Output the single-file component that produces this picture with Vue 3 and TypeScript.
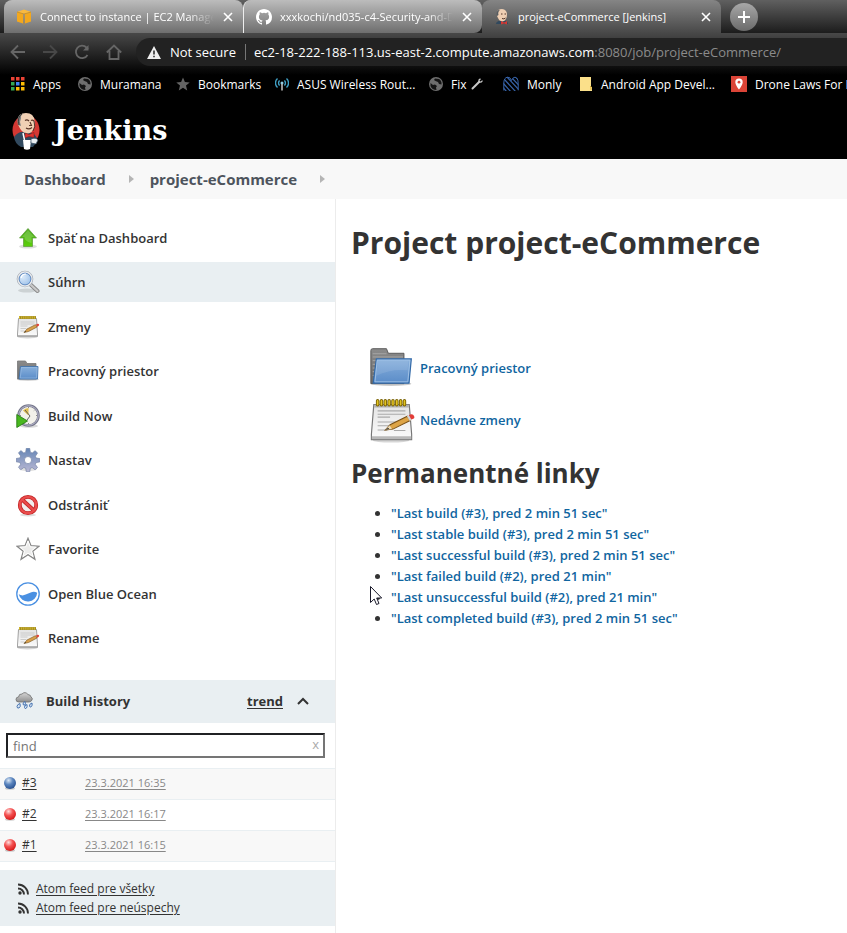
<script setup lang="ts">
import { ref } from 'vue'

interface Tab { icon: string; title: string; active?: boolean }
interface Bookmark { icon: string; label: string; wrench?: boolean }
interface Task { icon: string; label: string; selected?: boolean }
interface Build { id: string; color: 'blue' | 'red'; date: string }

const tabs: Tab[] = [
  { icon: 'cube', title: 'Connect to instance | EC2 Management Console' },
  { icon: 'github', title: 'xxxkochi/nd035-c4-Security-and-DevOps' },
  { icon: 'butler', title: 'project-eCommerce [Jenkins]', active: true },
]

const bookmarks: Bookmark[] = [
  { icon: 'apps', label: 'Apps' },
  { icon: 'globe', label: 'Muramana' },
  { icon: 'star-solid', label: 'Bookmarks' },
  { icon: 'antenna', label: 'ASUS Wireless Rout...' },
  { icon: 'globe', label: 'Fix', wrench: true },
  { icon: 'monly', label: 'Monly' },
  { icon: 'note', label: 'Android App Devel...' },
  { icon: 'pin', label: 'Drone Laws For E' },
]

const crumbs: string[] = ['Dashboard', 'project-eCommerce']

const tasks: Task[] = [
  { icon: 'up', label: 'Späť na Dashboard' },
  { icon: 'search', label: 'Súhrn', selected: true },
  { icon: 'notepad-small', label: 'Zmeny' },
  { icon: 'folder-small', label: 'Pracovný priestor' },
  { icon: 'clock', label: 'Build Now' },
  { icon: 'gear', label: 'Nastav' },
  { icon: 'forbid', label: 'Odstrániť' },
  { icon: 'star', label: 'Favorite' },
  { icon: 'ocean', label: 'Open Blue Ocean' },
  { icon: 'notepad-small', label: 'Rename' },
]

const builds: Build[] = [
  { id: '#3', color: 'blue', date: '23.3.2021 16:35' },
  { id: '#2', color: 'red', date: '23.3.2021 16:17' },
  { id: '#1', color: 'red', date: '23.3.2021 16:15' },
]

const feeds: string[] = ['Atom feed pre všetky', 'Atom feed pre neúspechy']

const permalinks: string[] = [
  '"Last build (#3), pred 2 min 51 sec"',
  '"Last stable build (#3), pred 2 min 51 sec"',
  '"Last successful build (#3), pred 2 min 51 sec"',
  '"Last failed build (#2), pred 21 min"',
  '"Last unsuccessful build (#2), pred 21 min"',
  '"Last completed build (#3), pred 2 min 51 sec"',
]

const query = ref('')
</script>

<template>
  <div class="page">
    <svg class="sprite" width="0" height="0" aria-hidden="true">
      <defs>
        <linearGradient id="gGreen" x1="0" y1="0" x2="0" y2="1"><stop offset="0" stop-color="#4aa81c" /><stop offset="1" stop-color="#5cd00a" /></linearGradient>
        <linearGradient id="gFolder" x1="0" y1="0" x2="0" y2="1"><stop offset="0" stop-color="#88b0dc" /><stop offset="1" stop-color="#5a8cc8" /></linearGradient>
        <linearGradient id="gBack" x1="0" y1="0" x2="0" y2="1"><stop offset="0" stop-color="#8b8b8b" /><stop offset="1" stop-color="#6a6a6a" /></linearGradient>
        <linearGradient id="gPaper" x1="0" y1="0" x2="0" y2="1"><stop offset="0" stop-color="#e4e4e4" /><stop offset="1" stop-color="#fbfbfb" /></linearGradient>
        <linearGradient id="gGear" x1="0" y1="0" x2="0" y2="1"><stop offset="0" stop-color="#6485b5" /><stop offset="1" stop-color="#bab8d4" /></linearGradient>
        <linearGradient id="gCloud" x1="0" y1="0" x2="0" y2="1"><stop offset="0" stop-color="#d5d5d5" /><stop offset="1" stop-color="#8f8f8f" /></linearGradient>
        <radialGradient id="gLens" cx=".35" cy=".35" r=".7"><stop offset="0" stop-color="#dcebfa" /><stop offset="1" stop-color="#9bbfe8" /></radialGradient>
        <radialGradient id="gBlue" cx=".38" cy=".28" r=".7"><stop offset="0" stop-color="#dce8f5" /><stop offset=".5" stop-color="#5c86bf" /><stop offset="1" stop-color="#2c5595" /></radialGradient>
        <radialGradient id="gRed" cx=".38" cy=".28" r=".7"><stop offset="0" stop-color="#ffe0e0" /><stop offset=".5" stop-color="#f45252" /><stop offset="1" stop-color="#d81e1e" /></radialGradient>
        <clipPath id="cMonly"><path d="M.5 15V7Q.5 1.500 4.500 1 7.500.8 8.500 4.500 10 .8 12 1q3.500.5 3.500 6v8z" /></clipPath>
      </defs>

      <symbol id="i-cube" viewBox="0 0 16 16">
        <path d="M1 3 7 1.500v13L1 12.500zM9 1.500 15 3v9.500L9 14.500z" fill="#f4a81d" />
        <path d="M1 3 8 .5 15 3 8 5z" fill="#f9b940" /><path d="M8 5v11M1 3l7 2 7-2" stroke="#b98a35" stroke-width=".8" fill="none" />
      </symbol>
      <symbol id="i-github" viewBox="0 0 16 16">
        <path fill="#fff" d="M8 0C3.580 0 0 3.580 0 8c0 3.540 2.290 6.530 5.470 7.590.4.070.55-.17.55-.38 0-.19-.01-.82-.01-1.490-2.010.37-2.530-.49-2.690-.94-.09-.23-.48-.94-.82-1.130-.28-.15-.68-.52-.01-.53.63-.01 1.080.58 1.230.82.72 1.210 1.870.87 2.330.66.07-.52.28-.87.51-1.070-1.780-.2-3.640-.89-3.640-3.950 0-.87.31-1.590.82-2.150-.08-.2-.36-1.020.08-2.120 0 0 .67-.21 2.200.82a7.600 7.600 0 0 1 4 0c1.530-1.040 2.200-.82 2.200-.82.44 1.100.16 1.920.08 2.120.51.56.82 1.270.82 2.150 0 3.070-1.870 3.750-3.650 3.950.29.25.54.73.54 1.480 0 1.070-.01 1.930-.01 2.200 0 .21.15.46.55.38A8 8 0 0 0 16 8c0-4.420-3.580-8-8-8z" />
      </symbol>
      <symbol id="i-butler" viewBox="0 0 16 16">
        <path d="M2 15q0-3 5-3.500h3q4 .5 4 3.500z" fill="#31495e" />
        <path d="M3 4q0-4 5-4 5 .5 5 5.500 0 6-4.500 7Q5 12 4 9 2.500 6.500 3 4z" fill="#efcfb3" />
        <path d="M3 7Q1.500 1 6 .7 3.500 3 4.500 6z" fill="#555b60" />
        <path d="m7 12 3 1.500 3-1.500v3.500l-3-1-3 1z" fill="#d33833" />
        <path d="M7 5h1.500M10.500 5H12M8 9.500q2 1 3.500-.5" stroke="#54362a" fill="none" />
      </symbol>
      <symbol id="i-jenkins" viewBox="0 0 28 38">
        <ellipse cx="14" cy="18" rx="13.500" ry="15" fill="#d33833" />
        <path d="M2 25q4-5 8-5h8q5 2 7 6-1 6-4 9H9Q3 32 2 25z" fill="#31495e" />
        <path d="M6 9Q6 1 14 1t8.500 8q.5 4-.5 7-2 5-6 5.500-5 0-8-5Q5.500 13 6 9z" fill="#f0d0b4" />
        <path d="M6 13Q3.500 3 11 1.500q-2.500 2-2 5L8 10l1 4z" fill="#7d8081" />
        <path d="M7 13q-2-8 3-11M22 9q2 6-1 10" fill="none" stroke="#38322c" stroke-width=".9" />
        <path d="M13 8.500q2-1.500 4 .5M19 8.500q1.500-1 3 .5M14 16q3 2 6-.5M18 10l1.500 3.500h-2.500" fill="none" stroke="#5a3628" stroke-width="1.100" />
        <path d="m13 21 4 1.500 5-2v5l-5-1-4 1.500z" fill="#e0332f" stroke="#7d1c1b" stroke-width=".5" />
        <path d="m11 21 1.500 7" stroke="#fff" stroke-width="1.500" fill="none" />
        <path d="M11 28h8l-1 9q-3 1.500-6 0z" fill="#fff" /><path d="M19 27q5-2 7 1l-2 4-5-1z" fill="#e9eef1" stroke="#31495e" stroke-width=".7" />
      </symbol>

      <symbol id="i-apps" viewBox="0 0 14 14">
        <path d="M0 0h3.500v3.500H0zM5 0h3.500v3.500H5zM10 0h3.500v3.500H10z" fill="#ea4335" />
        <path d="M0 5h3.500v3.500H0zM0 10h3.500v3.500H0z" fill="#34a853" /><path d="M5 5h3.500v3.500H5z" fill="#4285f4" />
        <path d="M10 5h3.500v3.500H10zM5 10h3.500v3.500H5zM10 10h3.500v3.500H10z" fill="#fbbc05" />
      </symbol>
      <symbol id="i-globe" viewBox="0 0 14 14">
        <circle cx="7" cy="7" r="7" fill="#6e6e6e" />
        <path d="M1.500 6 4 8l2-.5 2 1.500-1 1.500.5 2.500Q3 13 1.500 9zM6 1.500 5 3l1.500 1L9 5l1 2 2.500.5Q13 4 10 2z" fill="#141414" />
      </symbol>
      <symbol id="i-star-solid" viewBox="0 0 14 14"><path d="m7 .5 1.900 4.500 4.800.4L10 8.600l1.200 4.900L7 10.800l-4.200 2.700L4 8.600.3 5.400 5.100 5z" fill="#646464" /></symbol>
      <symbol id="i-antenna" viewBox="0 0 14 14">
        <path d="M2.500 1.500a6 6 0 0 0 0 9M4.600 3.500a3.500 3.500 0 0 0 0 5M11.500 1.500a6 6 0 0 1 0 9M9.400 3.500a3.500 3.500 0 0 1 0 5" fill="none" stroke="#3f9fc4" stroke-width="1.400" />
        <circle cx="7" cy="6" r="1.500" fill="#8ecbe2" /><path d="M7 7v6.500" stroke="#bbb" stroke-width="1.600" />
      </symbol>
      <symbol id="i-monly" viewBox="0 0 16 16">
        <path clip-path="url(#cMonly)" d="M0 11.500 4 16M0 7l8.500 9.500M1 3l12 13M3 0l13.500 14.500M8 1l9 9.500M11.500 0l5 5" fill="none" stroke="#3763a8" stroke-width="1.200" />
        <path d="M.8 14.500V7Q1 1.500 4.500 1.200 7.500 1 8.500 4.500 10 1 12 1.200q3 .5 3.200 6v7" fill="none" stroke="#3763a8" />
      </symbol>
      <symbol id="i-note" viewBox="0 0 14 14"><path d="M1 0h11v10h1v4H1z" fill="#fbe08a" /><path d="M11 9.500h1v3.500" stroke="#d6ab35" fill="none" /></symbol>
      <symbol id="i-pin" viewBox="0 0 16 16"><path d="M0 0h16v16H0z" fill="#db4437" /><path d="M8 2.500a3.700 3.700 0 0 0-3.700 3.700C4.300 9 8 13.500 8 13.500s3.700-4.500 3.700-7.300A3.700 3.700 0 0 0 8 2.500z" fill="#fff" /><circle cx="8" cy="6.200" r="1.400" fill="#db4437" /></symbol>
      <symbol id="i-wrench" viewBox="0 0 12 12"><path d="m1.500 10.500 6.800-6.800" stroke="#c8c8c8" stroke-width="2" stroke-linecap="round" /><path d="M9.500.7 8 2v2l2 .1 1.500-1.500" fill="none" stroke="#c8c8c8" stroke-width="1.300" /></symbol>

      <symbol id="i-up" viewBox="0 0 24 24">
        <ellipse cx="12" cy="20.500" rx="9" ry="2" fill="#000" opacity=".13" />
        <path d="m12 2.500 8.500 9.500h-4v8.500h-9V12h-4z" fill="url(#gGreen)" stroke="#5d9a3c" stroke-width=".7" /><path d="m12 4 6 7h-2.500v6Q8 15 8.500 11H6z" fill="#fff" opacity=".18" />
      </symbol>
      <symbol id="i-search" viewBox="0 0 24 24">
        <ellipse cx="11" cy="20.500" rx="9" ry="2" fill="#000" opacity=".12" />
        <path d="m14.500 14.500 7 6.500" stroke="#888" stroke-width="4" stroke-linecap="round" /><path d="m14.500 14.500 7 6.500" stroke="#c9c9c9" stroke-width="2.200" stroke-linecap="round" />
        <circle cx="9" cy="9" r="7" fill="url(#gLens)" stroke="#a0a6ae" stroke-width="2.600" /><circle cx="9" cy="9" r="7" fill="none" stroke="#e8ebef" stroke-width="1.300" />
        <circle cx="9" cy="9" r="5.800" fill="none" stroke="#5b8ccb" stroke-width=".8" /><path d="M5 8q1-4 5-4" stroke="#fff" stroke-width="1.200" fill="none" />
      </symbol>
      <symbol id="i-notepad-small" viewBox="0 0 24 24">
        <ellipse cx="11.500" cy="22" rx="10" ry="1.500" fill="#000" opacity=".16" />
        <path d="M2.500 3.500h18l1 15.500v2.500h-20V19z" fill="url(#gPaper)" stroke="#999" stroke-width=".9" /><path d="M2 20h19v1.500H2z" fill="#b5b5b5" />
        <path d="M3 2.500h17" stroke="#96801a" stroke-width="2.800" /><path d="M3 2.500h17" stroke="#d5ba30" stroke-width="2.600" stroke-dasharray="1.200 .9" />
        <path d="M4.500 7h14M4.500 9h14M4.500 11h7M4.500 13.500h6M4.500 16h4" stroke="#c2c2c2" stroke-width=".8" />
        <path d="m8 17.500 3-3.500 8.500-4.300 1.500 2.300-8.500 4.500z" fill="#d9a04a" stroke="#87622a" stroke-width=".7" /><path d="m8 17.500 1.500-1.500.7.800z" fill="#333" />
        <path d="m20 9.500 1.500-.8q1.500-.2 1.700 1.300l-.7 1-1.500.8z" fill="#dd4438" />
      </symbol>
      <symbol id="i-notepad" viewBox="0 0 48 48">
        <ellipse cx="23" cy="45.500" rx="19" ry="2" fill="#000" opacity=".16" />
        <path d="M5 8h37l2.500 31v5.500H2.500V39z" fill="url(#gPaper)" stroke="#777" stroke-width="1.200" />
        <path d="M3 41h41v3H3z" fill="#b9b9b9" /><path d="M5.500 8h36v3H5.500z" fill="#b0b0b0" />
        <path d="M9 4v4M13 4v4M17 4v4M21 4v4M25 4v4M29 4v4M33 4v4M37 4v4" stroke="#7a6200" stroke-width="3.600" stroke-linecap="round" />
        <path d="M9 4v4M13 4v4M17 4v4M21 4v4M25 4v4M29 4v4M33 4v4M37 4v4" stroke="#e2c321" stroke-width="1.700" stroke-linecap="round" />
        <path d="M9 14.500h29M9 18h29M9 21h13M9 26h23M9 30h12M9 34.500h10M26 35h12" stroke="#aaa" stroke-width="1.100" />
        <path d="m17 34.500 5-5.500 18-9 3 4.500-18 9z" fill="#dda446" stroke="#7a5116" stroke-width="1.100" /><path d="m17 34.500 4.500-5 2.500 3.800z" fill="#eddcb8" /><path d="m17 34.500 3-2.500 1 1.500z" fill="#222" />
        <path d="m41.500 19 1.500-.8q3-1 4 1.500t-1 3l-2 1z" fill="#e23c37" /><path d="m39.500 20 2-1 3 5-2 1z" fill="#d4d4d4" />
      </symbol>
      <symbol id="i-folder-small" viewBox="0 0 24 24">
        <ellipse cx="12" cy="20.500" rx="11" ry="1.500" fill="#000" opacity=".16" />
        <path d="M1.500 20V2h8l1.500 2.500h9V20z" fill="url(#gBack)" stroke="#777" stroke-width=".8" />
        <path d="M4.500 7.500H22L21.500 20H3z" fill="url(#gFolder)" stroke="#4474ac" stroke-width=".9" /><path d="M5.500 8.500h15.600L20.500 19H4.200z" fill="none" stroke="#9dc0e4" stroke-width=".6" />
      </symbol>
      <symbol id="i-folder" viewBox="0 -1 50 50">
        <ellipse cx="24" cy="41" rx="22" ry="2.500" fill="#000" opacity=".2" />
        <path d="M2 41V5q0-2 2-2h15l2 5h17v33z" fill="url(#gBack)" stroke="#555" stroke-width="1" />
        <path d="M4 8.500h15M4 12h33M4 16h4M4 20h4M4 24h3M4 28h3M4 32h2" stroke="#a9a9a9" />
        <path d="M8 14h38L43.500 40.500H4.500z" fill="url(#gFolder)" stroke="#336aa8" stroke-width="1.300" /><path d="M9 15.500h35.400L42.200 39H6.500z" fill="none" stroke="#a8c7e8" stroke-width=".9" />
        <path d="M10 16.500h33l-1 10q-18-2-34 6z" fill="#fff" opacity=".1" />
      </symbol>
      <symbol id="i-clock" viewBox="0 0 24 24">
        <ellipse cx="13" cy="22" rx="9" ry="1.700" fill="#000" opacity=".15" />
        <circle cx="12.500" cy="11.500" r="10" fill="#f2f1ea" stroke="#77798c" stroke-width="2.600" /><circle cx="12.500" cy="11.500" r="9.800" fill="none" stroke="#b7b6cd" />
        <path d="M12.500 11.500 7 6.500Q9 4 12.500 4z" fill="#dfbd4e" /><path d="m9 6 5 6-3 4" fill="none" stroke="#555" stroke-width=".9" />
        <path d="M12.500 3v1M12.500 19v1M4 11.500h1M20 11.500h1M18.500 6l-.7.700" stroke="#888" />
        <path d="M.8 10.500v13l10.700-6.500z" fill="#49b81f" stroke="#277d13" stroke-width=".9" />
      </symbol>
      <symbol id="i-gear" viewBox="0 0 24 24">
        <ellipse cx="12" cy="21" rx="9" ry="2" fill="#000" opacity=".12" />
        <path fill-rule="evenodd" d="M10.300.3h3.400l.6 3.900 1.900.8 3-2.300 2.300 2.400-2.100 3.100.7 1.800 3.700.6v3.300l-3.700.6-.8 1.900 2.200 3.100-2.400 2.300-3-2.300-1.800.8-.6 3.500h-3.400l-.6-3.600-1.900-.7-3 2.200-2.300-2.400 2.200-3-.8-1.900-3.700-.6v-3.300l3.700-.6.8-1.900-2.200-3.100 2.300-2.300L7.800 5l1.900-.8zM12 8.500a3.600 3.600 0 1 0 0 7.200 3.600 3.600 0 0 0 0-7.200z" fill="url(#gGear)" stroke="#7484a6" stroke-width=".7" />
      </symbol>
      <symbol id="i-forbid" viewBox="0 0 24 24">
        <ellipse cx="12" cy="22" rx="8" ry="1.500" fill="#000" opacity=".13" />
        <circle cx="12" cy="12" r="8.200" fill="#f1eeee" stroke="#c22626" stroke-width="3.800" /><path d="m6 6.500 12 11" stroke="#c22626" stroke-width="3.800" />
        <circle cx="12" cy="12" r="8.200" fill="none" stroke="#ea4c4c" stroke-width="2.300" /><path d="m6 6.500 12 11" stroke="#ea4c4c" stroke-width="2.300" />
      </symbol>
      <symbol id="i-star" viewBox="0 0 24 24"><path d="m12 1.200 3 7.500 8.200.5-6.400 5.100 2.200 8L12 17.800l-7 4.500 2.200-8L.8 9.200 9 8.700z" fill="#ececeb" stroke="#858585" stroke-width="1.200" /><path d="m12 4 2.200 5.800 5.800.4-4.500 3.600 1.500 5.700-5-3.300-5 3.300 1.500-5.700L4 10.200l5.800-.4z" fill="none" stroke="#fff" /></symbol>
      <symbol id="i-ocean" viewBox="0 0 24 24"><circle cx="12" cy="12" r="11.200" fill="#fff" stroke="#4a90e2" stroke-width="1.300" /><path d="M2.700 12.300q3.500 2 7 .3l5-2.200q3.500-1.200 6.500.3A9.400 9.400 0 0 1 2.700 12.300z" fill="#4a90e2" /></symbol>
      <symbol id="i-rain" viewBox="0 0 18 18">
        <path d="M4 10Q1 10 1 7.500T3.500 5Q4 1.500 7 2q3-3 6 .5 3 .5 3 2.500 2 1 1 3t-3 2z" fill="url(#gCloud)" stroke="#6f6f6f" stroke-width=".8" />
        <path d="M5 11.500q-3 1-3 3T4 16q2-1 1-4.500zM10 9.500q-2 1-2 2.500t2 1q1-1 0-3.500zM12 12.500q-3 1-2.500 3t2 .5q1-1 .5-3.500zM17 11q-3 1-2.500 3t2 .5q1-1 .5-3.500z" fill="#d8e6f4" stroke="#3a69aa" stroke-width=".9" />
      </symbol>
      <symbol id="i-rss" viewBox="0 0 14 14"><circle cx="3" cy="11" r="1.700" fill="#333" /><path d="M1 6.500a6 6 0 0 1 6 6M1 2.500a10 10 0 0 1 10 10" fill="none" stroke="#333" stroke-width="1.900" /></symbol>
      <symbol id="i-ball-blue" viewBox="0 0 14 14"><ellipse cx="7" cy="12.500" rx="5" ry="1.200" opacity=".2" /><circle cx="7" cy="7" r="6" fill="url(#gBlue)" /></symbol>
      <symbol id="i-ball-red" viewBox="0 0 14 14"><ellipse cx="7" cy="12.500" rx="5" ry="1.200" opacity=".2" /><circle cx="7" cy="7" r="6" fill="url(#gRed)" /></symbol>
    </svg>

    <div class="chrome">
      <div class="tabstrip">
        <div v-for="tab in tabs" :key="tab.title" class="tab" :class="{ active: tab.active }">
          <svg class="i16"><use :href="'#i-' + tab.icon" /></svg>
          <span class="tab-title">{{ tab.title }}</span>
          <button class="tab-close" type="button" aria-label="Close tab">
            <svg width="10" height="10" viewBox="0 0 10 10"><path d="m1 1 8 8M9 1 1 9" stroke="#fff" stroke-width="1.600" /></svg>
          </button>
        </div>
        <button class="new-tab" type="button" aria-label="New tab">
          <svg width="12" height="12" viewBox="0 0 12 12"><path d="M6 0v12M0 6h12" stroke="#fff" stroke-width="2" /></svg>
        </button>
      </div>

      <div class="toolbar">
        <nav class="nav-buttons">
          <button type="button" aria-label="Back"><svg class="i16" viewBox="0 0 16 16"><path d="M15 8H2M8 1.500 1.500 8 8 14.500" /></svg></button>
          <button type="button" aria-label="Forward"><svg class="i16 dim" viewBox="0 0 16 16"><path d="M1 8h13M8 1.500 14.500 8 8 14.500" /></svg></button>
          <button type="button" aria-label="Reload"><svg class="i16" viewBox="0 0 16 16"><path d="M13.500 11A6.200 6.200 0 1 1 12.500 3.500L14 5" /><path d="M14.500 1v5.500H9z" class="solid" /></svg></button>
          <button type="button" aria-label="Home"><svg class="i16" viewBox="0 0 16 16"><path d="M.8 8.500 8 1.500l7.200 7M3.500 7v8h9V7" /></svg></button>
        </nav>
        <div class="omnibox">
          <svg class="warn" viewBox="0 0 14 13"><path d="M7 0 14 13H0z" fill="#eee" /><path d="M7 4.500v4M7 9.700v1.600" stroke="#222" stroke-width="1.500" /></svg>
          <span class="secure">Not secure</span>
          <span class="url"><b>ec2-18-222-188-113.us-east-2.compute.amazonaws.com</b>:8080/job/project-eCommerce/</span>
        </div>
      </div>

      <nav class="bookmarks">
        <a v-for="mark in bookmarks" :key="mark.label" href="#">
          <svg :class="mark.icon === 'pin' || mark.icon === 'monly' ? 'i16' : 'i14'"><use :href="'#i-' + mark.icon" /></svg>
          <span>{{ mark.label }}</span>
          <svg v-if="mark.wrench" class="wrench"><use href="#i-wrench" /></svg>
        </a>
      </nav>
    </div>

    <header class="header">
      <a href="#" class="logo"><svg class="mascot"><use href="#i-jenkins" /></svg><span>Jenkins</span></a>
    </header>

    <nav class="crumbs">
      <template v-for="crumb in crumbs" :key="crumb">
        <a href="#">{{ crumb }}</a>
        <svg width="5" height="8" viewBox="0 0 5 8"><path d="m0 0 5 4-5 4z" fill="#b5b5b5" /></svg>
      </template>
    </nav>

    <div class="body">
      <aside class="side">
        <nav class="tasks">
          <a v-for="task in tasks" :key="task.label" href="#" :class="{ selected: task.selected }">
            <svg class="i24"><use :href="'#i-' + task.icon" /></svg>
            <span>{{ task.label }}</span>
          </a>
        </nav>

        <section class="history">
          <div class="history-head">
            <svg class="i18"><use href="#i-rain" /></svg>
            <h3>Build History</h3>
            <a href="#">trend</a>
            <button type="button" aria-label="Collapse"><svg width="12" height="8" viewBox="0 0 12 8"><path d="m1 7 5-5 5 5" fill="none" stroke="#333" stroke-width="2" /></svg></button>
          </div>
          <div class="find">
            <input v-model="query" type="text" placeholder="find" aria-label="find" />
            <button type="button" aria-label="Clear" @click="query = ''">x</button>
          </div>
          <table>
            <tbody>
              <tr v-for="build in builds" :key="build.id">
                <td class="num"><span><svg class="i14"><use :href="'#i-ball-' + build.color" /></svg><a href="#">{{ build.id }}</a></span></td>
                <td><a href="#" class="date">{{ build.date }}</a></td>
              </tr>
            </tbody>
          </table>
          <div class="feeds">
            <a v-for="feed in feeds" :key="feed" href="#"><svg class="i14"><use href="#i-rss" /></svg><span>{{ feed }}</span></a>
          </div>
        </section>
      </aside>

      <main class="main">
        <h1>Project project-eCommerce</h1>
        <div class="shortcuts">
          <a href="#"><svg class="i46"><use href="#i-folder" /></svg><span>Pracovný priestor</span></a>
          <a href="#"><svg class="i46"><use href="#i-notepad" /></svg><span>Nedávne zmeny</span></a>
        </div>
        <h2>Permanentné linky</h2>
        <ul>
          <li v-for="link in permalinks" :key="link"><a href="#">{{ link }}</a></li>
        </ul>
        <svg class="cursor" width="12" height="19" viewBox="0 0 12 19"><path d="M.5.500v16l3.700-3.500 2.300 5.500 2.500-1-2.300-5.500h5z" fill="#fff" stroke="#1a1a2a" /></svg>
      </main>
    </div>
  </div>
</template>

<style>
body { margin: 0; background: #fff; }
</style>

<style scoped>
.page { min-height: 100vh; display: flex; flex-direction: column; font-family: "Open Sans", "Noto Sans", sans-serif; font-size: 13px; color: #333; overflow: hidden; }
.page * { box-sizing: border-box; }
.sprite { position: absolute; }
a { color: inherit; text-decoration: none; }
button { padding: 0; border: 0; background: none; color: inherit; font: inherit; display: flex; align-items: center; justify-content: center; }
svg { flex: none; display: block; }
.i14 { width: 14px; height: 14px; }
.i16 { width: 16px; height: 16px; }
.i18 { width: 18px; height: 18px; }
.i24 { width: 24px; height: 24px; }
.i46 { width: 46px; height: 46px; }

.chrome { background: linear-gradient(#484848 33px, #000 75px); color: #fff; }
.tabstrip { display: flex; align-items: flex-start; height: 33px; padding-left: 4px; background: linear-gradient(#606060, #1c1c1c); overflow: hidden; }
.tab { flex: 0 1 239px; min-width: 0; display: flex; align-items: center; height: 33px; padding: 0 7px 0 12px; border-radius: 8px 8px 0 0; background: linear-gradient(#bcbcbc, #6e6e6e); font-size: 11px; }
.tab:nth-child(2) { border-left: 1px solid #eee; border-bottom-right-radius: 8px; }
.tab.active { background: linear-gradient(#858585, #484848); }
.tab-title { flex: 1; min-width: 0; margin-left: 8px; overflow: hidden; white-space: nowrap; mask-image: linear-gradient(90deg, #000 85%, transparent); }
.tab.active .tab-title { mask-image: none; }
.tab-close { flex: none; width: 16px; height: 16px; margin-left: 6px; }
.new-tab { flex: none; width: 28px; height: 28px; margin: 3px 0 0 9px; border-radius: 50%; background: linear-gradient(#a8a8a8, #6a6a6a); }

.toolbar { display: flex; padding-top: 5px; }
.nav-buttons { display: flex; align-items: center; gap: 16px; padding: 0 14px 0 10px; }
.nav-buttons path { fill: none; stroke: #666; stroke-width: 1.800; }
.nav-buttons .dim path { stroke: #484848; }
.nav-buttons .solid { fill: #666; stroke: none; }
.omnibox { flex: 1; min-width: 0; display: flex; align-items: center; height: 28px; padding-left: 11px; border-radius: 14px 0 0 14px; background: #222; white-space: nowrap; overflow: hidden; }
.warn { width: 14px; height: 13px; }
.secure { width: 76px; margin-left: 9px; border-right: 1px solid #777; line-height: 16px; }
.url { margin-left: 8px; color: #8b8b8b; }
.url b { color: #fff; font-weight: 400; }
.bookmarks { display: grid; grid-template-columns: 67px 98px 99px 154px 74px 76px 152px 1fr; align-items: center; height: 36px; padding-left: 11px; font-size: 12px; white-space: nowrap; }
.bookmarks a { display: flex; align-items: center; }
.bookmarks span { margin-left: 8px; }
.wrench { width: 12px; height: 12px; margin-left: 4px; }

.header { display: flex; align-items: center; height: 57px; padding-left: 12px; background: #000; color: #fff; }
.logo { display: flex; align-items: center; gap: 14px; font: bold 27px "DejaVu Serif", serif; }
.mascot { width: 28px; height: 38px; }
.crumbs { display: flex; align-items: center; height: 40px; padding-left: 24px; background: #f8f8f8; color: #4d545d; font-size: 15px; font-weight: 700; }
.crumbs svg { margin: 0 16px 0 23px; }

.body { flex: 1; display: flex; }
.side { flex: 0 0 336px; border-right: 1px solid #ececec; }
.tasks { display: grid; grid-auto-rows: 40px; align-content: space-between; min-height: 440px; margin: 19px 0 22px; font-size: 13px; font-weight: 600; }
.tasks a { display: flex; align-items: center; gap: 8px; padding-left: 16px; }
.tasks .selected { background: #e9eff2; }
.history-head { display: flex; align-items: center; height: 43px; padding: 0 26px 2px 15px; background: #e9eff2; font-size: 13px; font-weight: 700; }
.history-head h3 { flex: 1; margin: 0 0 0 13px; font-size: 13px; line-height: 20px; }
.history-head a { text-decoration: underline; text-underline-offset: 2px; }
.history-head button { margin-left: 14px; }
.find { position: relative; padding: 10px; padding-left: 6px; }
.find input { display: block; width: 100%; height: 25px; padding: 0 24px 0 5px; border: 2px solid; border-color: #202124 #757575 #757575 #202124; background: #fff; color: #333; font: inherit; font-size: 13px; }
.find input::placeholder { color: #757575; opacity: 1; }
.find button { position: absolute; top: 13px; right: 16px; height: 16px; color: #aaa; font-size: 13px; }
table { width: 100%; border-collapse: collapse; font-size: 12px; }
tr { height: 31px; border-top: 1px solid #e9eff2; }
tr:last-child { border-bottom: 1px solid #e9eff2; }
tr:nth-child(odd) { background: #f8f8f8; }
td { padding: 0 0 2px; line-height: 16px; }
td a { text-decoration: underline; text-underline-offset: 2px; }
.num { width: 85px; }
.num span { display: flex; align-items: center; gap: 5px; padding-left: 3px; }
.date { color: #888; font-size: 11px; }
.feeds { margin-top: 8px; padding: 9px 0 9px 17px; background: #e9eff2; font-size: 12px; line-height: 19px; }
.feeds a { display: flex; align-items: center; gap: 5px; text-decoration: underline; text-underline-offset: 2px; }

.main { position: relative; flex: 1; min-width: 0; padding: 22px 15px; color: #333; }
h1 { margin: 0; font-size: 30px; line-height: 44px; }
.shortcuts { display: grid; gap: 6px; margin: 80px 0 0 18px; color: #1065a0; font-weight: 600; }
.shortcuts a { display: flex; align-items: center; gap: 5px; }
h2 { margin: 12px 0; font-size: 26px; line-height: 36px; }
ul { margin: 0; padding-left: 40px; font-weight: 600; }
li { line-height: 21px; }
li a { color: #1065a0; }
.cursor { position: absolute; left: 34px; top: 387px; }
</style>
